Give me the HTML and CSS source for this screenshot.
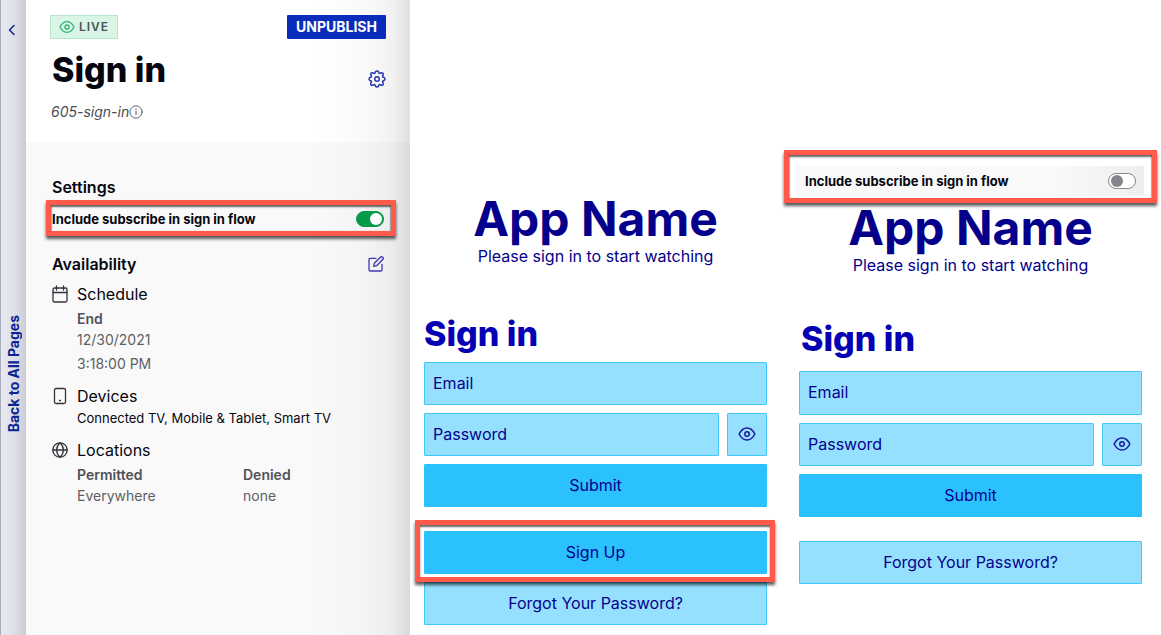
FILE: index.html
```html
<!DOCTYPE html>
<html lang="en">
<head>
<meta charset="utf-8">
<meta name="viewport" content="width=device-width, initial-scale=1">
<title>Sign in page settings</title>
<link rel="stylesheet" href="styles.css">
</head>
<body>
<svg class="defs" aria-hidden="true">
  <symbol id="eye" viewBox="0 0 24 24"><path d="M1.500 12C4 7 7.500 4 12 4s8 3 10.500 8C20 17 16.500 20 12 20S4 17 1.500 12z"/><circle cx="12" cy="12" r="3"/></symbol>
</svg>
<div class="app">
  <a class="rail" href="#pages">
    <svg class="icon rail-arrow" viewBox="0 0 8 12" aria-hidden="true"><path d="M6 1.500 1.500 6 6 10.500"/></svg>
    <span class="rail-label">Back to All Pages</span>
  </a>

  <aside class="panel">
    <header class="panel-head">
      <div class="row">
        <span class="badge"><svg class="icon badge-eye" aria-hidden="true"><use href="#eye"/></svg>LIVE</span>
        <button class="unpublish" type="button">UNPUBLISH</button>
      </div>
      <div class="row title-row">
        <h1 class="heading">Sign in</h1>
        <button class="icon-button" type="button" aria-label="Page settings">
          <svg class="icon gear" viewBox="0 0 24 24" aria-hidden="true"><path d="M9.900 2.500Q12 .3 14.100 2.500L14.700 4.200Q15.400 4.700 16.200 4.500L17.800 3.700Q20.700 3.700 20.300 6.200L19.500 7.800Q19.300 8.600 19.800 9.300L21.500 9.900Q23.700 12 21.500 14.100L19.800 14.700Q19.300 15.400 19.500 16.200L20.300 17.800Q20.700 20.700 17.800 20.300L16.200 19.500Q15.400 19.300 14.700 19.800L14.100 21.500Q12 23.700 9.900 21.500L9.300 19.800Q8.600 19.300 7.800 19.500L6.200 20.300Q3.300 20.700 3.700 17.800L4.500 16.200Q4.700 15.400 4.200 14.700L2.500 14.100Q.3 12 2.500 9.900L4.200 9.300Q4.700 8.600 4.500 7.800L3.700 6.200Q3.300 3.300 6.200 3.700L7.800 4.500Q8.600 4.700 9.300 4.200Z"/><circle cx="12" cy="12" r="3"/></svg>
        </button>
      </div>
      <p class="slug">605-sign-in<svg class="icon info" viewBox="0 0 16 16" aria-hidden="true"><circle cx="8" cy="8" r="7"/><path d="M8 7.200v4M8 4.500v1.300"/></svg></p>
    </header>

    <div class="panel-body">
      <h2 class="section-title">Settings</h2>
      <div class="marked marked-setting">
        <label class="setting" for="subscribe-on">Include subscribe in sign in flow</label>
        <input class="toggle" id="subscribe-on" type="checkbox" checked>
      </div>

      <div class="row availability">
        <h2 class="section-title">Availability</h2>
        <button class="icon-button" type="button" aria-label="Edit availability">
          <svg class="icon edit" viewBox="0 0 24 24" aria-hidden="true"><path d="M12 3.500H3.500A2 2 0 0 0 1.500 5.500V20.500A2 2 0 0 0 3.500 22.500H19A2 2 0 0 0 21 20.500V12.500M8.500 15.500 9.500 11 19 1.500Q20.500 .5 22 2T22.500 5L13 14.500Z"/></svg>
        </button>
      </div>

      <section class="detail">
        <svg class="icon detail-icon" viewBox="0 0 16 18" aria-hidden="true"><rect x="1" y="3" width="14" height="14" rx="1.500"/><path d="M1 7.500h14M4.500 1v4M11.500 1v4"/></svg>
        <div class="detail-text">
          <h3 class="detail-title">Schedule</h3>
          <dl class="facts"><div><dt>End</dt><dd>12/30/2021</dd><dd class="time">3:18:00 PM</dd></div></dl>
        </div>
      </section>
      <section class="detail">
        <svg class="icon detail-icon" viewBox="0 0 16 18" aria-hidden="true"><rect x="2.500" y="1.500" width="11" height="15" rx="1.500"/><path d="M7.500 13.500h1"/></svg>
        <div class="detail-text">
          <h3 class="detail-title">Devices</h3>
          <p class="devices">Connected TV, Mobile &amp; Tablet, Smart TV</p>
        </div>
      </section>
      <section class="detail">
        <svg class="icon detail-icon" viewBox="0 0 16 18" aria-hidden="true"><circle cx="8" cy="9" r="7.200"/><path d="M.8 9h14.400M8 1.800C3.500 6 3.500 12 8 16.200M8 1.800c4.500 4.200 4.500 10.200 0 14.400"/></svg>
        <div class="detail-text">
          <h3 class="detail-title">Locations</h3>
          <dl class="facts"><div><dt>Permitted</dt><dd>Everywhere</dd></div><div><dt>Denied</dt><dd>none</dd></div></dl>
        </div>
      </section>
    </div>
  </aside>

  <main class="previews">
    <section class="preview preview-on">
      <h2 class="app-name">App Name</h2>
      <p class="tagline">Please sign in to start watching</p>
      <h3 class="heading">Sign in</h3>
      <form class="form">
        <input class="field" type="email" placeholder="Email" aria-label="Email">
        <div class="password">
          <input class="field" type="password" placeholder="Password" aria-label="Password">
          <button class="field reveal" type="button" aria-label="Show password"><svg class="icon reveal-eye" aria-hidden="true"><use href="#eye"/></svg></button>
        </div>
        <button class="field primary" type="button">Submit</button>
        <div class="signup"><button class="field primary" type="button">Sign Up</button></div>
        <button class="field" type="button">Forgot Your Password?</button>
      </form>
    </section>

    <section class="preview preview-off">
      <div class="marked marked-strip">
        <div class="strip">
          <label class="setting" for="subscribe-off">Include subscribe in sign in flow</label>
          <input class="toggle" id="subscribe-off" type="checkbox">
        </div>
      </div>
      <h2 class="app-name">App Name</h2>
      <p class="tagline">Please sign in to start watching</p>
      <h3 class="heading">Sign in</h3>
      <form class="form">
        <input class="field email" type="email" placeholder="Email" aria-label="Email">
        <div class="password">
          <input class="field" type="password" placeholder="Password" aria-label="Password">
          <button class="field reveal" type="button" aria-label="Show password"><svg class="icon reveal-eye" aria-hidden="true"><use href="#eye"/></svg></button>
        </div>
        <button class="field primary" type="button">Submit</button>
        <button class="field forgot" type="button">Forgot Your Password?</button>
      </form>
    </section>
  </main>
</div>
</body>
</html>
```

FILE: styles.css
```css
* { box-sizing: border-box; }
body { margin: 0; background: #fff; color: #05060f; font: 16px/24px Inter, "Liberation Sans", sans-serif; }
h1, h2, h3, p, dl, dd { margin: 0; }
button, input { font: inherit; margin: 0; }
button { cursor: pointer; }
.defs { position: absolute; width: 0; height: 0; }
.icon { display: block; flex: none; fill: none; stroke: currentColor; stroke-linecap: round; stroke-linejoin: round; stroke-width: 2; }
.row { display: flex; align-items: center; justify-content: space-between; }

.app { display: grid; grid-template-columns: 26px 384px minmax(0, 1fr); min-height: 100vh; }

.rail { display: flex; flex-direction: column; align-items: center; padding-top: 24px; border-left: 1px solid #a9abbd; background: linear-gradient(90deg, #e8eaf1, #dddfe6 55%, #cccdd4); color: #0b2494; text-decoration: none; }
.rail-arrow { width: 8px; height: 12px; margin-right: 3px; stroke-width: 1.5; }
.rail-label { margin-top: 279px; writing-mode: vertical-rl; transform: rotate(180deg); font-size: 14px; line-height: 24px; font-weight: 700; white-space: nowrap; }

.panel { background: linear-gradient(90deg, transparent 75%, rgba(0, 0, 0, .02) 88%, rgba(0, 0, 0, .05) 95%, rgba(0, 0, 0, .12)), linear-gradient(#fff 142px, #f9f9f9 142px); }
.panel-head { height: 142px; padding: 15px 24px 0; }
.badge { display: flex; align-items: center; gap: 4px; height: 24px; padding: 0 8px; border: 1px solid #b8e6cd; background: #d8f5e5; color: #4b5259; font-size: 12px; font-weight: 600; letter-spacing: 1px; }
.badge-eye { width: 16px; height: 16px; color: #2fb573; }
.unpublish { height: 24px; padding: 0 9px; border: 0; border-radius: 1px; background: #0a2cba; color: #fff; font-size: 14px; line-height: 24px; font-weight: 700; }
.heading { font-size: 34px; line-height: 44px; font-weight: 800; }
.title-row { padding: 9px 0 0 2px; }
.icon-button { display: flex; padding: 0; border: 0; background: none; color: #2538ae; }
.gear { width: 18px; height: 18px; margin-top: 18px; }
.slug { display: flex; align-items: center; padding: 8px 0 0 1px; color: #4b4d55; font-size: 14px; font-style: italic; }
.info { width: 14px; height: 14px; stroke-width: 1; }

.panel-body { padding: 33px 26px 24px; }
.section-title { font-size: 16px; line-height: 24px; font-weight: 600; }
.marked { border: 5px solid #ff5a4a; box-shadow: 0 3px 3px rgba(0, 0, 0, .65), inset 0 2px 2px rgba(0, 0, 0, .6), inset 1px 0 1px rgba(0, 0, 0, .2), inset -1px 0 1px rgba(0, 0, 0, .2); }
.marked-setting { display: flex; align-items: center; justify-content: space-between; height: 36px; margin: 1px -12px 16px -6px; padding: 2px 7px 0 1px; }
.setting { font-size: 13px; line-height: 20px; font-weight: 700; white-space: nowrap; }
.toggle { appearance: none; display: flex; align-items: center; width: 28px; height: 16px; padding: 0 2px; border: 1px solid #85868c; border-radius: 8px; background: #fff; }
.toggle::before { content: ""; width: 12px; height: 12px; border-radius: 50%; background: #85868c; }
.toggle:checked { justify-content: flex-end; padding: 0 1px; border-color: #079b49; background: #079b49; }
.toggle:checked::before { background: #fff; }
.availability { margin-bottom: 6px; }
.edit { width: 16px; height: 16px; color: #4038b4; }

.detail { display: flex; gap: 9px; margin-bottom: 10px; }
.detail-icon { width: 16px; height: 18px; margin-top: 3px; color: #33353d; stroke-width: 1.3; }
.detail-text { flex: 1; min-width: 0; }
.detail-title { font-size: 16px; line-height: 24px; font-weight: 400; }
.devices { font-size: 13px; line-height: 20px; }
.facts { display: grid; grid-template-columns: 166px 1fr; margin-top: 2px; color: #5d5f65; font-size: 14px; line-height: 20px; }
.facts dt { color: #505258; line-height: 22px; font-weight: 600; }
.time { margin-top: 4px; }

.previews { display: grid; grid-template-columns: 1fr 1fr; gap: 32px; padding: 0 19px 10px 14px; color: #05008c; }
.preview { min-width: 0; }
.preview-on { padding-top: 194px; }
.preview-off { padding-top: 150px; }
.app-name { font-size: 48px; line-height: 50px; font-weight: 700; text-align: center; }
.tagline { text-align: center; }
.preview .heading { color: #0500b4; }
.preview-on .heading { margin: 44px 0 6px; }
.preview-off .heading { margin: 40px 0 10px; padding-left: 2px; }
.form { display: grid; gap: 8px; }
.field { width: 100%; min-width: 0; height: 43px; padding: 0 8px 2px; border: 1px solid #45c6fb; border-radius: 1px; background: #95e0ff; color: #05008c; }
.field::placeholder { color: #05008c; opacity: 1; }
.email { height: 44px; }
.primary { border-color: #2bc1ff; background: #2bc1ff; }
.password { display: grid; grid-template-columns: minmax(0, 1fr) 40px; gap: 8px; }
.reveal { display: flex; align-items: center; justify-content: center; padding: 0 1px 1px 0; }
.reveal-eye { width: 18px; height: 18px; color: #1d1ba0; }
.signup { position: relative; display: grid; margin-top: 16px; }
.signup::after { content: ""; position: absolute; inset: -11px -8px -8px -9px; border: 5px solid #ff5a4a; box-shadow: 0 3px 3px rgba(0, 0, 0, .65), inset 0 2px 2px rgba(0, 0, 0, .6); pointer-events: none; }
.forgot { margin-top: 16px; }
.marked-strip { height: 53px; margin: 0 -15px; padding: 11px 8px 0 7px; }
.strip { display: flex; align-items: center; justify-content: space-between; height: 29px; padding: 0 8px 0 9px; background: linear-gradient(90deg, #f9f9f9 75%, #eee); color: #05060f; }
```
